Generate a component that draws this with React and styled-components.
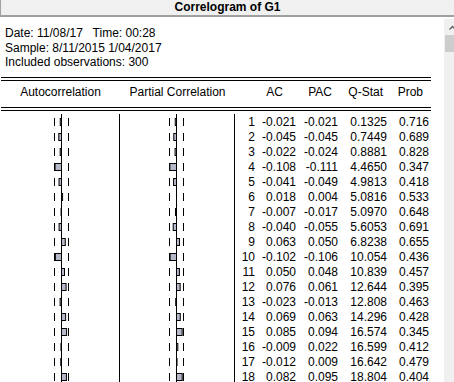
import styled, { createGlobalStyle } from "styled-components";

const GlobalStyle = createGlobalStyle`
  html, body {
    margin: 0;
    padding: 0;
    background: #fff;
  }
  body {
    font-family: "Liberation Sans", Arial, sans-serif;
    font-size: 12px;
    color: #000;
  }
`;

const Window = styled.div`
  width: 454px;
  height: 382px;
  overflow: hidden;
  display: flex;
  flex-direction: column;
  background: #fff;
`;

const TitleBar = styled.div`
  flex: 0 0 auto;
  height: 15px;
  line-height: 15px;
  text-align: center;
  font-weight: bold;
  background: #f0f0f0;
  border-left: 1px solid #a0a0a0;
  border-bottom: 2px solid #a0a0a0;
`;

const Body = styled.div`
  flex: 1;
  min-height: 0;
  display: flex;
`;

const Content = styled.div`
  flex: 0 0 444px;
  overflow: hidden;
`;

const Info = styled.div`
  padding: 9px 0 0 5px;
  line-height: 14.5px;
  white-space: pre;
`;

const DoubleRule = styled.div`
  width: 430px;
  height: 2px;
  margin: ${(p) => p.$top}px 0 0 1px;
  border-top: 1px solid #000;
  border-bottom: 1px solid #000;
`;

const columns = "119px 115px 20px 41px 42px 49px 42px";

const HeaderRow = styled.div`
  display: grid;
  grid-template-columns: ${columns};
  margin-left: 1px;
  height: 26px;
  box-sizing: border-box;
  padding-top: 4px;
  line-height: 15px;
`;

const HeadCell = styled.div`
  text-align: ${(p) => p.$align || "right"};
  padding-right: ${(p) => p.$pad || 0}px;
  white-space: nowrap;
`;

const Rows = styled.div`
  margin: 3px 0 0 1px;
`;

const Row = styled.div`
  display: grid;
  grid-template-columns: ${columns};
  height: 15px;
`;

const PlotCell = styled.div`
  border-right: 1px solid #000;
  height: 15px;
  svg {
    display: block;
  }
`;

const NumCell = styled.div`
  text-align: right;
  padding-top: 2px;
  line-height: 13px;
  white-space: nowrap;
`;

const Scroll = styled.div`
  flex: 0 0 17px;
  margin-top: 2px;
  background: #f0f0f0;
  display: flex;
  flex-direction: column;
`;

const ArrowBtn = styled.div`
  height: 16px;
  display: flex;
  align-items: center;
  justify-content: center;
`;

const Thumb = styled.div`
  height: 17px;
  margin: 0 1px;
  background: #cdcdcd;
`;

const data = [
  [1, "-0.021", "-0.021", "0.1325", "0.716"],
  [2, "-0.045", "-0.045", "0.7449", "0.689"],
  [3, "-0.022", "-0.024", "0.8881", "0.828"],
  [4, "-0.108", "-0.111", "4.4650", "0.347"],
  [5, "-0.041", "-0.049", "4.9813", "0.418"],
  [6, "0.018", "0.004", "5.0816", "0.533"],
  [7, "-0.007", "-0.017", "5.0970", "0.648"],
  [8, "-0.040", "-0.055", "5.6053", "0.691"],
  [9, "0.063", "0.050", "6.8238", "0.655"],
  [10, "-0.102", "-0.106", "10.054", "0.436"],
  [11, "0.050", "0.048", "10.839", "0.457"],
  [12, "0.076", "0.061", "12.644", "0.395"],
  [13, "-0.023", "-0.013", "12.808", "0.463"],
  [14, "0.069", "0.063", "14.296", "0.428"],
  [15, "0.085", "0.094", "16.574", "0.345"],
  [16, "-0.009", "0.022", "16.599", "0.412"],
  [17, "-0.012", "0.009", "16.642", "0.479"],
  [18, "0.082", "0.095", "18.804", "0.404"],
];

const SCALE = 60;

// one row of the correlogram bars: axis, ±2se dashes, bar
const BarPlot = ({ value, width, axis }) => {
  const v = parseFloat(value);
  const w = Math.abs(v) * SCALE;
  const x = v < 0 ? axis + 0.5 - w : axis + 0.5;
  return (
    <svg width={width} height={15}>
      <line x1={axis - 6.5} y1={4} x2={axis - 6.5} y2={12} stroke="#000" />
      <line x1={axis + 7.5} y1={4} x2={axis + 7.5} y2={12} stroke="#000" />
      {w > 0.3 && (
        <rect
          x={x}
          y={4.5}
          width={w}
          height={7}
          fill="#b4b8c8"
          stroke="#000"
          strokeWidth={1}
        />
      )}
      <line x1={axis + 0.5} y1={0} x2={axis + 0.5} y2={15} stroke="#000" />
    </svg>
  );
};

export default function App() {
  return (
    <>
      <GlobalStyle />
      <Window>
        <TitleBar>Correlogram of G1</TitleBar>
        <Body>
          <Content>
            <Info>
              {"Date: 11/08/17   Time: 00:28\nSample: 8/11/2015 1/04/2017\nIncluded observations: 300"}
            </Info>
            <DoubleRule $top={7.5} />
            <HeaderRow>
              <HeadCell $align="center">Autocorrelation</HeadCell>
              <HeadCell $align="center">Partial Correlation</HeadCell>
              <HeadCell />
              <HeadCell $pad={13}>AC</HeadCell>
              <HeadCell $pad={6}>PAC</HeadCell>
              <HeadCell $pad={4}>Q-Stat</HeadCell>
              <HeadCell $pad={6}>Prob</HeadCell>
            </HeaderRow>
            <DoubleRule $top={0} />
            <Rows>
              {data.map(([n, ac, pac, q, p]) => (
                <Row key={n}>
                  <PlotCell>
                    <BarPlot value={ac} width={118} axis={60} />
                  </PlotCell>
                  <PlotCell>
                    <BarPlot value={pac} width={114} axis={56} />
                  </PlotCell>
                  <NumCell>{n}</NumCell>
                  <NumCell>{ac}</NumCell>
                  <NumCell>{pac}</NumCell>
                  <NumCell>{q}</NumCell>
                  <NumCell>{p}</NumCell>
                </Row>
              ))}
            </Rows>
          </Content>
          <Scroll>
            <ArrowBtn>
              <svg width="7" height="5" viewBox="0 0 7 5">
                <path d="M0.5 4.5 L3.5 1.5 L6.5 4.5" fill="none" stroke="#606060" strokeWidth="1.4" />
              </svg>
            </ArrowBtn>
            <Thumb />
          </Scroll>
        </Body>
      </Window>
    </>
  );
}
